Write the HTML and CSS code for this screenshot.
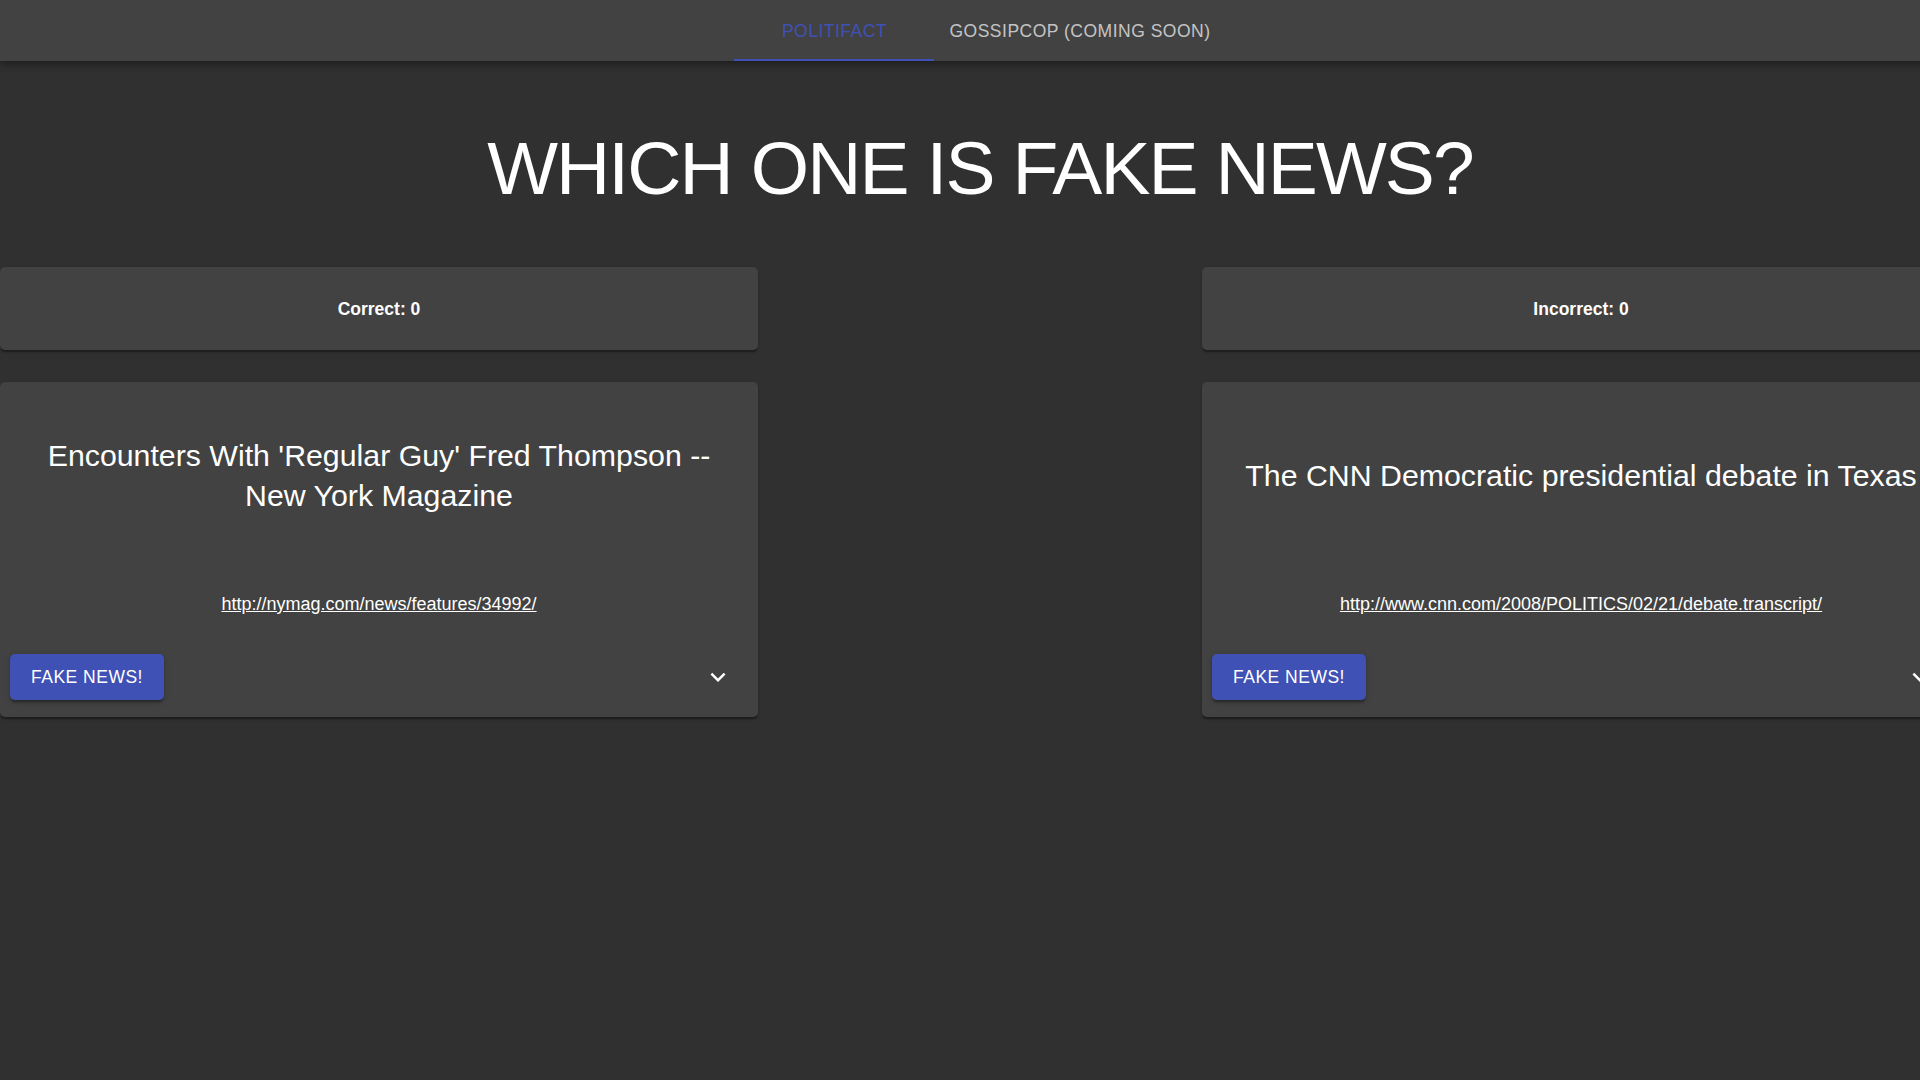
FILE: index.html
```html
<!DOCTYPE html>
<html lang="en">
<head>
<meta charset="utf-8">
<title>Which one is fake news?</title>
<link rel="stylesheet" href="styles.css">
</head>
<body>
<div class="page">
  <header class="appbar">
    <nav class="tabs">
      <button class="tab tab-active">Politifact</button>
      <button class="tab">GossipCop (Coming Soon)</button>
    </nav>
  </header>

  <h2 class="title">WHICH ONE IS FAKE NEWS?</h2>

  <main class="board">
    <div class="card score">Correct: 0</div>
    <div class="spacer"></div>
    <div class="card score">Incorrect: 0</div>

    <article class="card news">
      <div class="news-content">
        <div class="headline-box">
          <h5 class="headline">Encounters With 'Regular Guy' Fred Thompson -- New York Magazine</h5>
        </div>
        <p class="link-row"><a class="link" href="#">http://nymag.com/news/features/34992/</a></p>
      </div>
      <div class="actions">
        <button class="btn">Fake News!</button>
        <button class="icon-btn" aria-label="show more">
          <svg viewBox="0 0 24 24" width="30" height="30"><path fill="currentColor" d="M16.59 8.59L12 13.17 7.41 8.59 6 10l6 6 6-6z"/></svg>
        </button>
      </div>
    </article>
    <div class="spacer"></div>
    <article class="card news">
      <div class="news-content">
        <div class="headline-box">
          <h5 class="headline">The CNN Democratic presidential debate in Texas</h5>
        </div>
        <p class="link-row"><a class="link" href="#">http://www.cnn.com/2008/POLITICS/02/21/debate.transcript/</a></p>
      </div>
      <div class="actions">
        <button class="btn">Fake News!</button>
        <button class="icon-btn" aria-label="show more">
          <svg viewBox="0 0 24 24" width="30" height="30"><path fill="currentColor" d="M16.59 8.59L12 13.17 7.41 8.59 6 10l6 6 6-6z"/></svg>
        </button>
      </div>
    </article>
  </main>
</div>
</body>
</html>
```

FILE: styles.css
```css
html, body {
  margin: 0;
  padding: 0;
  background: #303030;
  overflow: hidden;
  height: 1080px;
}

body {
  font-family: "Liberation Sans", Arial, Helvetica, sans-serif;
  color: #fff;
}

.page {
  width: 1960px;
  min-height: 1080px;
  background: #303030;
}

.appbar {
  height: 61px;
  background: #424242;
  box-shadow: 0 2.5px 5px -1px rgba(0,0,0,0.2), 0 5px 6px 0 rgba(0,0,0,0.14), 0 1px 12px 0 rgba(0,0,0,0.12);
  display: flex;
  justify-content: center;
}

.tabs {
  display: flex;
  height: 100%;
}

.tab {
  min-width: 200px;
  height: 100%;
  padding: 4px 15px 0;
  border: 0;
  background: transparent;
  font-family: inherit;
  font-size: 17.5px;
  font-weight: 500;
  letter-spacing: 0.5px;
  text-transform: uppercase;
  color: rgba(255,255,255,0.7);
  border-bottom: 2.5px solid transparent;
  box-sizing: border-box;
  cursor: pointer;
}

.tab-active {
  color: #3f51b5;
  border-bottom-color: #3f51b5;
}

.title {
  margin: 62px 0 0;
  height: 90px;
  line-height: 90px;
  font-size: 75px;
  font-weight: 300;
  letter-spacing: -1.9px;
  text-align: center;
}

.board {
  margin-top: 54px;
  display: grid;
  grid-template-columns: 758px 1fr 758px;
  row-gap: 32px;
}

.card {
  background: #424242;
  border-radius: 5px;
  box-shadow: 0 2.5px 1.25px -1.25px rgba(0,0,0,0.2), 0 1.25px 1.25px 0 rgba(0,0,0,0.14), 0 1.25px 3.75px 0 rgba(0,0,0,0.12);
}

.score {
  height: 83px;
  display: flex;
  align-items: center;
  justify-content: center;
  font-size: 17.5px;
  font-weight: 700;
  padding-top: 2px;
  box-sizing: border-box;
}

.news {
  height: 335px;
  display: flex;
  flex-direction: column;
  box-sizing: border-box;
}

.news-content {
  padding: 20px 20px 0;
}

.headline-box {
  height: 148px;
  display: flex;
  align-items: center;
  justify-content: center;
}

.headline {
  margin: 0;
  font-size: 30.3px;
  font-weight: 400;
  line-height: 40.5px;
  text-align: center;
  white-space: nowrap;
}

.news:first-of-type .headline {
  white-space: normal;
}

.link-row {
  margin: 42px 0 0;
  text-align: center;
  font-size: 18px;
  line-height: 25px;
}

.link {
  color: #fff;
  text-decoration: underline;
}

.actions {
  margin-top: auto;
  padding: 0 10px 10px;
  display: flex;
  align-items: center;
}

.btn {
  height: 46px;
  width: 154px;
  border: 0;
  border-radius: 5px;
  background: #3f51b5;
  color: #fff;
  font-family: inherit;
  font-size: 17.5px;
  font-weight: 500;
  letter-spacing: 0.5px;
  text-transform: uppercase;
  box-shadow: 0 3.75px 1.25px -2.5px rgba(0,0,0,0.2), 0 2.5px 2.5px 0 rgba(0,0,0,0.14), 0 1.25px 6.25px 0 rgba(0,0,0,0.12);
  cursor: pointer;
}

.icon-btn {
  margin-left: auto;
  width: 60px;
  height: 60px;
  padding: 15px;
  border: 0;
  border-radius: 50%;
  background: transparent;
  color: #fff;
  display: flex;
  align-items: center;
  justify-content: center;
  cursor: pointer;
}

.icon-btn svg {
  display: block;
}
```
